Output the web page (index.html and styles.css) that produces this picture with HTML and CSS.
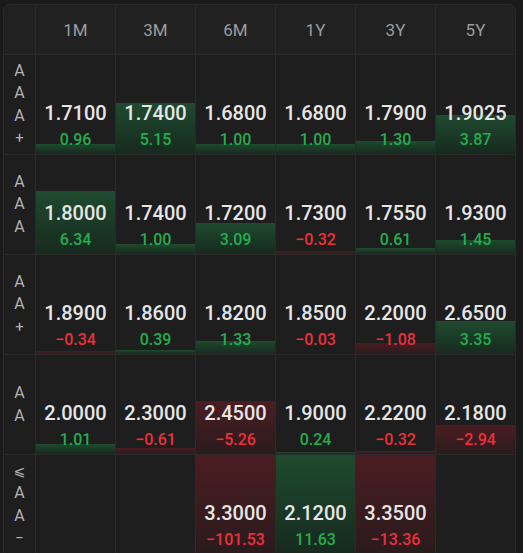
FILE: index.html
```html
<!DOCTYPE html>
<html lang="en">
<head>
<meta charset="utf-8">
<title>Yield matrix</title>
<link rel="stylesheet" href="styles.css">
</head>
<body>
<div class="matrix">
  <div class="hd corner"></div>
  <div class="hd">1M</div>
  <div class="hd">3M</div>
  <div class="hd">6M</div>
  <div class="hd">1Y</div>
  <div class="hd">3Y</div>
  <div class="hd">5Y</div>

  <div class="lbl"><span>A</span><span>A</span><span>A</span><span class="sym">+</span></div>
  <div class="cell up" style="--h:9.6px"><b>1.7100</b><i>0.96</i></div>
  <div class="cell up" style="--h:51.5px"><b>1.7400</b><i>5.15</i></div>
  <div class="cell up" style="--h:10px"><b>1.6800</b><i>1.00</i></div>
  <div class="cell up" style="--h:10px"><b>1.6800</b><i>1.00</i></div>
  <div class="cell up" style="--h:13px"><b>1.7900</b><i>1.30</i></div>
  <div class="cell up" style="--h:38.7px"><b>1.9025</b><i>3.87</i></div>

  <div class="lbl"><span>A</span><span>A</span><span>A</span></div>
  <div class="cell up" style="--h:63.4px"><b>1.8000</b><i>6.34</i></div>
  <div class="cell up" style="--h:10px"><b>1.7400</b><i>1.00</i></div>
  <div class="cell up" style="--h:30.9px"><b>1.7200</b><i>3.09</i></div>
  <div class="cell dn" style="--h:3.2px"><b>1.7300</b><i>−0.32</i></div>
  <div class="cell up" style="--h:6.1px"><b>1.7550</b><i>0.61</i></div>
  <div class="cell up" style="--h:14.5px"><b>1.9300</b><i>1.45</i></div>

  <div class="lbl"><span>A</span><span>A</span><span class="sym">+</span></div>
  <div class="cell dn" style="--h:3.4px"><b>1.8900</b><i>−0.34</i></div>
  <div class="cell up" style="--h:3.9px"><b>1.8600</b><i>0.39</i></div>
  <div class="cell up" style="--h:13.3px"><b>1.8200</b><i>1.33</i></div>
  <div class="cell dn" style="--h:0.3px"><b>1.8500</b><i>−0.03</i></div>
  <div class="cell dn" style="--h:10.8px"><b>2.2000</b><i>−1.08</i></div>
  <div class="cell up" style="--h:33.5px"><b>2.6500</b><i>3.35</i></div>

  <div class="lbl"><span>A</span><span>A</span></div>
  <div class="cell up" style="--h:10.1px"><b>2.0000</b><i>1.01</i></div>
  <div class="cell dn" style="--h:6.1px"><b>2.3000</b><i>−0.61</i></div>
  <div class="cell dn" style="--h:52.6px"><b>2.4500</b><i>−5.26</i></div>
  <div class="cell up" style="--h:2.4px"><b>1.9000</b><i>0.24</i></div>
  <div class="cell dn" style="--h:3.2px"><b>2.2200</b><i>−0.32</i></div>
  <div class="cell dn" style="--h:29.4px"><b>2.1800</b><i>−2.94</i></div>

  <div class="lbl"><span class="sym le">⩽</span><span>A</span><span>A</span><span class="sym">−</span></div>
  <div class="cell"></div>
  <div class="cell"></div>
  <div class="cell dn" style="--h:100%"><b>3.3000</b><i>−101.53</i></div>
  <div class="cell up" style="--h:100%"><b>2.1200</b><i>11.63</i></div>
  <div class="cell dn" style="--h:100%"><b>3.3500</b><i>−13.36</i></div>
  <div class="cell"></div>
</div>
</body>
</html>
```

FILE: styles.css
```css
html, body {
  margin: 0;
  padding: 0;
  background: #1a1a1a;
  height: 553px;
  overflow: hidden;
}

body {
  padding: 4px 0 0 3px;
  font-family: Roboto, "Noto Sans", sans-serif;
}

.matrix {
  display: grid;
  grid-template-columns: 31px repeat(6, 79px);
  grid-template-rows: 49px repeat(5, 99px);
  gap: 1px;
  width: max-content;
  background: #2a2a2a;
  border: 1px solid #2a2a2a;
  border-bottom: 0;
  border-radius: 7px 7px 0 0;
  overflow: hidden;
}

.hd {
  background: #212121;
  color: #9c9c9c;
  font-size: 17px;
  display: flex;
  align-items: center;
  justify-content: center;
}

.lbl {
  background: #1e1e1e;
  color: #b4b4b4;
  font-size: 16px;
  line-height: 22.5px;
  display: flex;
  flex-direction: column;
  align-items: center;
  justify-content: center;
}

.lbl .sym {
  font-size: 15px;
}

.lbl .le {
  font-family: "DejaVu Sans", sans-serif;
  font-size: 14px;
}

.cell {
  background: #1e1e1e;
  display: flex;
  flex-direction: column;
  align-items: center;
  justify-content: flex-end;
  padding-bottom: 3px;
  box-sizing: border-box;
}

.cell.up {
  background: linear-gradient(#1f4b2f, #17291e) bottom / 100% var(--h) no-repeat, #1e1e1e;
}

.cell.dn {
  background: linear-gradient(#4b1d22, #2a1b1d) bottom / 100% var(--h) no-repeat, #1e1e1e;
}

.cell b {
  font-weight: 500;
  font-size: 20px;
  line-height: 24px;
  color: #e6e6e6;
}

.cell i {
  font-style: normal;
  font-weight: 500;
  font-size: 16px;
  line-height: 22px;
  margin-top: 4px;
}

.cell.up i {
  color: #20b04c;
}

.cell.dn i {
  color: #ee2f3b;
}
```
